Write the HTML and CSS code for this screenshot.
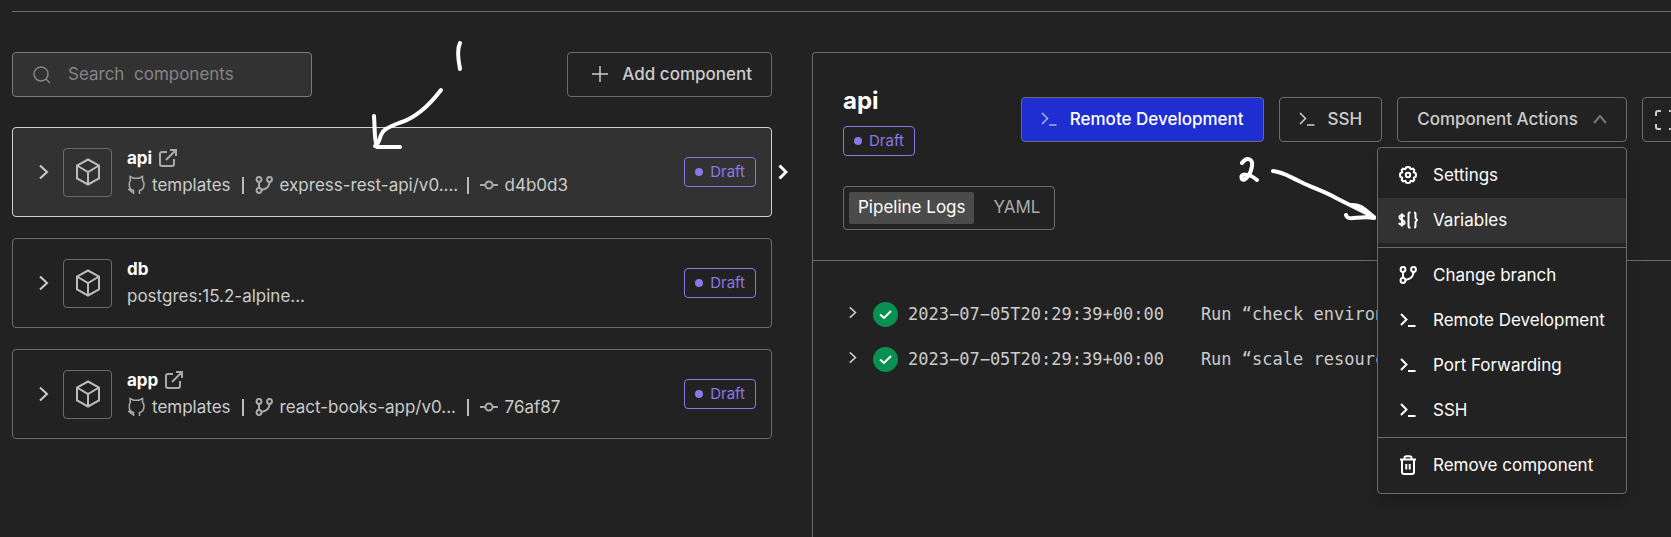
FILE: index.html
```html
<!DOCTYPE html>
<html lang="en">
<head>
<meta charset="utf-8">
<title>Components</title>
<link rel="stylesheet" href="styles.css">
</head>
<body>
<svg class="sprite" aria-hidden="true">
  <symbol id="chevron" viewBox="0 0 10 16"><path d="M1 1.500 8 8 1 14.500"/></symbol>
  <symbol id="cube" viewBox="0 0 26 28"><path d="M13 1.500 24 7.500V20.500L13 26.500 2 20.500V7.500ZM2 7.500 13 14 24 7.500M13 14V26.500"/></symbol>
  <symbol id="external" viewBox="0 0 18 18"><path d="M8 3H3Q1 3 1 5V15Q1 17 3 17H13Q15 17 15 15V10M11 1H17V7M17 1 7 11"/></symbol>
  <symbol id="cat" viewBox="0 0 18 20"><path d="M6.500 19V15.500C3 15 2 12.500 2.300 8.500Q2.400 6.500 3.400 5.500L3 1.500 6.500 3.200H12L15.500 1.500 15.600 5.500Q17 7 17 9C17 13 15.500 15 12.500 15.500V19M6.500 17Q4.300 17.300 3.500 15.800T1 14.500"/></symbol>
  <symbol id="branch" viewBox="0 0 18 18"><circle cx="4" cy="3.500" r="2.400"/><circle cx="14.500" cy="3.500" r="2.400"/><circle cx="4" cy="14.500" r="2.400"/><path d="M4 6V12M14.500 6C14.500 10 11.500 13 6.500 14"/></symbol>
  <symbol id="commit" viewBox="0 0 18 10"><circle cx="9" cy="5" r="3.500"/><path d="M0 5H5.500M12.500 5H18"/></symbol>
  <symbol id="terminal" viewBox="0 0 16 14"><path d="M1 1 6.500 6.500 1 12M8 13H15.500"/></symbol>
  <symbol id="check" viewBox="0 0 25 25"><circle class="check-disc" cx="12.500" cy="12.500" r="12.500"/><path class="check-mark" d="M7 12.500 11 16 18 9"/></symbol>
</svg>

<main class="page">
  <div class="workspace">
    <section class="list" aria-label="Components">
      <div class="toolbar">
        <label class="search">
          <svg class="search-icon" viewBox="0 0 18 18" aria-hidden="true"><circle cx="8" cy="8" r="7"/><path d="M13 13 17 17"/></svg>
          <input class="search-input" type="text" placeholder="Search&nbsp; components" aria-label="Search components">
        </label>
        <button class="button" type="button">
          <svg class="plus" viewBox="0 0 18 18" aria-hidden="true"><path d="M9 1V17M1 9H17"/></svg>
          Add component
        </button>
      </div>

      <article class="card card-selected">
        <button class="expand" type="button" aria-label="Expand api"><svg class="icon-chevron"><use href="#chevron"/></svg></button>
        <span class="cube-box"><svg class="icon-cube"><use href="#cube"/></svg></span>
        <div class="info">
          <h2 class="name">api <a class="link" href="#api" aria-label="Open api"><svg class="icon-18"><use href="#external"/></svg></a></h2>
          <div class="meta">
            <span class="repo"><svg class="icon-cat"><use href="#cat"/></svg>templates</span>
            <i class="bar"></i>
            <span class="ref"><svg class="icon-18"><use href="#branch"/></svg>express-rest-api/v0....</span>
            <i class="bar"></i>
            <span class="commit"><svg class="icon-commit"><use href="#commit"/></svg>d4b0d3</span>
          </div>
        </div>
        <span class="badge">Draft</span>
        <svg class="pointer" viewBox="0 0 10 16" aria-hidden="true"><path d="M1.500 1.500 8 8 1.500 14.500"/></svg>
      </article>

      <article class="card">
        <button class="expand" type="button" aria-label="Expand db"><svg class="icon-chevron"><use href="#chevron"/></svg></button>
        <span class="cube-box"><svg class="icon-cube"><use href="#cube"/></svg></span>
        <div class="info">
          <h2 class="name">db</h2>
          <div class="meta">postgres:15.2-alpine...</div>
        </div>
        <span class="badge">Draft</span>
      </article>

      <article class="card">
        <button class="expand" type="button" aria-label="Expand app"><svg class="icon-chevron"><use href="#chevron"/></svg></button>
        <span class="cube-box"><svg class="icon-cube"><use href="#cube"/></svg></span>
        <div class="info">
          <h2 class="name">app <a class="link" href="#app" aria-label="Open app"><svg class="icon-18"><use href="#external"/></svg></a></h2>
          <div class="meta">
            <span class="repo"><svg class="icon-cat"><use href="#cat"/></svg>templates</span>
            <i class="bar"></i>
            <span class="ref"><svg class="icon-18"><use href="#branch"/></svg>react-books-app/v0...</span>
            <i class="bar"></i>
            <span class="commit"><svg class="icon-commit"><use href="#commit"/></svg>76af87</span>
          </div>
        </div>
        <span class="badge">Draft</span>
      </article>
    </section>

    <section class="panel" aria-label="api">
      <header class="panel-head">
        <div class="title-row">
          <div class="title-block">
            <h1 class="title">api</h1>
            <span class="badge">Draft</span>
          </div>
          <div class="actions">
            <button class="button button-primary" type="button"><svg class="icon-term"><use href="#terminal"/></svg>Remote Development</button>
            <button class="button" type="button"><svg class="icon-term"><use href="#terminal"/></svg>SSH</button>
            <div class="dropdown">
              <button class="button button-menu" type="button" aria-expanded="true">Component Actions<svg class="caret" viewBox="0 0 14 10" aria-hidden="true"><path d="M1 9 7 2 13 9"/></svg></button>
              <div class="menu">
                <div class="menu-group">
                  <button class="item" type="button"><svg class="icon-menu" viewBox="0 0 18 18"><path d="M9 1 10.800 1.300 11.600 3.200 14 2.700 15.300 4 14.800 6.400 16.700 7.200 17 9 16.700 10.800 14.800 11.600 15.300 14 14 15.300 11.600 14.800 10.800 16.700 9 17 7.200 16.700 6.400 14.800 4 15.300 2.700 14 3.200 11.600 1.300 10.800 1 9 1.300 7.200 3.200 6.400 2.700 4 4 2.700 6.400 3.200 7.200 1.300Z"/><circle cx="9" cy="9" r="2.200"/></svg>Settings</button>
                  <button class="item item-active" type="button"><svg class="icon-menu" viewBox="0 0 20 18"><path d="M6.300 5.800C5.800 3.500 1.500 3.500 1.500 6.300 1.500 9.500 6.600 8.200 6.600 11.300 6.600 14.300 1.700 14.300 1.200 11.700M4 2.500V15.500M12.500 1.500H11.500Q10.500 1.500 10.500 3V15Q10.500 16.500 11.500 16.500H12.500M16 1.500Q17.500 1.500 17.500 3V7L19 9 17.500 11V15Q17.500 16.500 16 16.500"/></svg>Variables</button>
                </div>
                <div class="menu-group">
                  <button class="item" type="button"><svg class="icon-menu"><use href="#branch"/></svg>Change branch</button>
                  <button class="item" type="button"><svg class="icon-menu icon-term-menu"><use href="#terminal"/></svg>Remote Development</button>
                  <button class="item" type="button"><svg class="icon-menu icon-term-menu"><use href="#terminal"/></svg>Port Forwarding</button>
                  <button class="item" type="button"><svg class="icon-menu icon-term-menu"><use href="#terminal"/></svg>SSH</button>
                </div>
                <div class="menu-group">
                  <button class="item" type="button"><svg class="icon-menu icon-trash" viewBox="0 0 18 20"><path d="M1 4.500H17M5.500 4.500V3Q5.500 1.200 7.300 1.200H10.700Q12.500 1.200 12.500 3V4.500M3 4.500V17Q3 19 5 19H13Q15 19 15 17V4.500M7.300 9V14.500M10.700 9V14.500"/></svg>Remove component</button>
                </div>
              </div>
            </div>
            <button class="button button-full" type="button" aria-label="Full screen"><svg class="icon-full" viewBox="0 0 20 20"><path d="M1 6V3Q1 1 3 1H6M14 1H17Q19 1 19 3V6M19 14V17Q19 19 17 19H14M6 19H3Q1 19 1 17V14"/></svg></button>
          </div>
        </div>
        <div class="tabs">
          <button class="tab tab-active" type="button">Pipeline Logs</button>
          <button class="tab" type="button">YAML</button>
        </div>
      </header>
      <div class="logs">
        <div class="log">
          <svg class="log-chevron"><use href="#chevron"/></svg>
          <svg class="log-check"><use href="#check"/></svg>
          <time class="log-time">2023−07−05T20:29:39+00:00</time>
          <span class="log-text">Run “check environment”</span>
        </div>
        <div class="log">
          <svg class="log-chevron"><use href="#chevron"/></svg>
          <svg class="log-check"><use href="#check"/></svg>
          <time class="log-time">2023−07−05T20:29:39+00:00</time>
          <span class="log-text">Run “scale resources”</span>
        </div>
      </div>
    </section>
  </div>
</main>

<svg class="note note-one" viewBox="0 0 100 116" aria-hidden="true">
  <path d="M90 3C87 9 88 19 90 29"/><path d="M71 50C58 67 43 79 29 83 16 88 13 90 11 95 9 102 7 106 5 106M4 76C5 88 4 99 7 107H30"/>
</svg>
<svg class="note note-two" viewBox="0 0 142 72" aria-hidden="true">
  <path d="M5 8C10 1 16 4 15 11 14 19 8 27 5 24 2 18 12 18 20 25M36 16C46 17 51 21 64 27 76 33 89 37 99 43L137 62M113 50C124 49 128 55 137 62M109 60C111 67 122 60 137 63"/>
</svg>
</body>
</html>
```
FILE: styles.css
```css
* { box-sizing: border-box; }
body {
  margin: 0;
  background: #222;
  color: #ccc;
  font: 400 17px/24px Inter, "Liberation Sans", sans-serif;
  overflow: hidden;
}
button, input { font: inherit; color: inherit; }
button { cursor: pointer; }
h1, h2 { margin: 0; }
svg { fill: none; stroke: currentColor; stroke-width: 2; flex: none; }
.sprite { position: absolute; width: 0; height: 0; }

.page { width: calc(100% + 48px); padding: 11px 0 0 12px; }
.workspace {
  display: grid;
  grid-template-columns: minmax(0, 760fr) minmax(0, 907fr);
  gap: 40px;
  min-height: calc(100vh - 11px);
  border-top: 1px solid #6b6b6b;
  padding-top: 40px;
}

.list { display: flex; flex-direction: column; gap: 21px; }
.toolbar { display: flex; justify-content: space-between; margin-bottom: 9px; }
.search {
  display: flex;
  align-items: center;
  gap: 17px;
  width: 300px;
  height: 45px;
  padding: 0 20px;
  border: 1px solid #7b7b7b;
  border-radius: 4px;
  background: #323232;
  color: #858585;
}
.search-icon { width: 18px; height: 18px; stroke-width: 1.5; }
.search-input { flex: 1; min-width: 0; padding: 0 0 2px; border: 0; background: none; outline: 0; }
.search-input::placeholder { color: #858585; opacity: 1; }

.button {
  display: flex;
  align-items: center;
  gap: 13px;
  height: 45px;
  padding: 0 19px 2px;
  border: 1px solid #6b6b6b;
  border-radius: 4px;
  background: #222;
  font-weight: 500;
  white-space: nowrap;
}
.plus { width: 18px; height: 18px; margin-left: 4px; stroke-width: 1.5; }

.card {
  position: relative;
  display: flex;
  align-items: center;
  height: 90px;
  padding: 0 15px 0 26px;
  border: 1px solid #6b6b6b;
  border-radius: 4px;
}
.card-selected { background: #323232; border-color: #d0d0d0; }
.expand { display: flex; padding: 0; border: 0; background: none; }
.icon-chevron { width: 10px; height: 16px; }
.cube-box {
  display: grid;
  place-items: center;
  width: 49px;
  height: 49px;
  margin: 0 15px 0 14px;
  border: 1px solid #6b6b6b;
  border-radius: 4px;
  color: #bbb;
}
.icon-cube { width: 26px; height: 28px; }
.info { flex: 1; min-width: 0; padding-bottom: 1px; }
.name { display: flex; align-items: center; gap: 7px; color: #fff; font-size: 17px; line-height: 27px; font-weight: 700; }
.link { display: flex; color: #aaa; }
.icon-18 { width: 18px; height: 18px; }
.meta { display: flex; align-items: center; line-height: 27px; white-space: nowrap; }
.repo, .ref, .commit { display: flex; align-items: center; gap: 7px; }
.repo svg, .ref svg, .commit svg { color: #aaa; }
.ref { width: 201px; }
.icon-cat { width: 18px; height: 20px; stroke-width: 1.5; }
.icon-commit { width: 18px; height: 10px; }
.bar { width: 2px; height: 17px; margin: 0 11px; background: #bbb; }
.badge {
  display: inline-flex;
  align-items: center;
  gap: 7px;
  height: 30px;
  padding: 0 10px 1px;
  border: 1px solid #8b78e6;
  border-radius: 4px;
  color: #8b78e6;
  font-size: 15px;
}
.badge::before { content: ""; width: 8px; height: 8px; border-radius: 50%; background: #8b78e6; }
.pointer { position: absolute; right: -17px; top: 36px; width: 10px; height: 16px; color: #fff; stroke-width: 3; }

.panel { border: 1px solid #6b6b6b; border-bottom: 0; border-radius: 4px 4px 0 0; }
.panel-head { padding: 32px 30px 30px; border-bottom: 1px solid #6b6b6b; }
.title-row { display: flex; justify-content: space-between; }
.title { margin-bottom: 9px; color: #fff; font-size: 24px; line-height: 32px; font-weight: 700; }
.title-block .badge { display: flex; }
.actions { display: flex; gap: 15px; padding-top: 12px; }
.button-primary { background: #1f2ed1; color: #fff; }
.button-primary svg { color: #aab0f0; }
.icon-term { width: 16px; height: 14px; stroke-width: 1.5; }
.button-menu { gap: 15px; }
.caret { width: 14px; height: 10px; color: #777; }
.button-full { padding: 0 12px; }
.icon-full { width: 20px; height: 20px; }
.tabs { display: flex; width: fit-content; height: 44px; margin-top: 30px; padding: 5px; border: 1px solid #6b6b6b; border-radius: 4px; }
.tab { padding: 0 9px 2px; border: 0; border-radius: 2px; background: none; color: #aaa; }
.tab + .tab { margin-left: 10px; }
.tab-active { background: #4b4b4b; color: #fff; }

.dropdown { position: relative; }
.menu {
  position: absolute;
  z-index: 1;
  top: 50px;
  right: 0;
  width: 250px;
  border: 1px solid #6b6b6b;
  border-radius: 4px;
  background: #222;
  box-shadow: 0 8px 16px #0003;
}
.menu-group { padding: 5px 0 4px; }
.menu-group + .menu-group { border-top: 1px solid #6b6b6b; }
.menu-group:last-child { padding-bottom: 5px; }
.item {
  display: flex;
  align-items: center;
  gap: 15px;
  width: 100%;
  height: 45px;
  padding: 0 20px 2px;
  border: 0;
  background: none;
  color: #fff;
  white-space: nowrap;
}
.item-active { background: #323232; }
.icon-menu { width: 20px; height: 18px; }
.icon-term-menu { height: 14px; }
.icon-trash { height: 20px; }

.logs { display: grid; gap: 20px; padding: 41px 36px; }
.log {
  display: flex;
  align-items: center;
  height: 25px;
  font: 17px/25px "DejaVu Sans Mono", "Liberation Mono", monospace;
  white-space: nowrap;
}
.log-chevron { width: 8px; height: 13px; margin: 0 16px 4px 0; }
.log-check { width: 25px; height: 25px; margin-right: 10px; }
.check-disc { fill: #079150; stroke: none; }
.check-mark { stroke: #fff; }
.log-time { margin-right: 37px; }

.note { position: absolute; z-index: 2; color: #fff; stroke-width: 4; stroke-linecap: round; stroke-linejoin: round; pointer-events: none; }
.note-one { left: 370px; top: 40px; width: 100px; height: 116px; }
.note-two { left: 1237px; top: 155px; width: 142px; height: 72px; }
```
